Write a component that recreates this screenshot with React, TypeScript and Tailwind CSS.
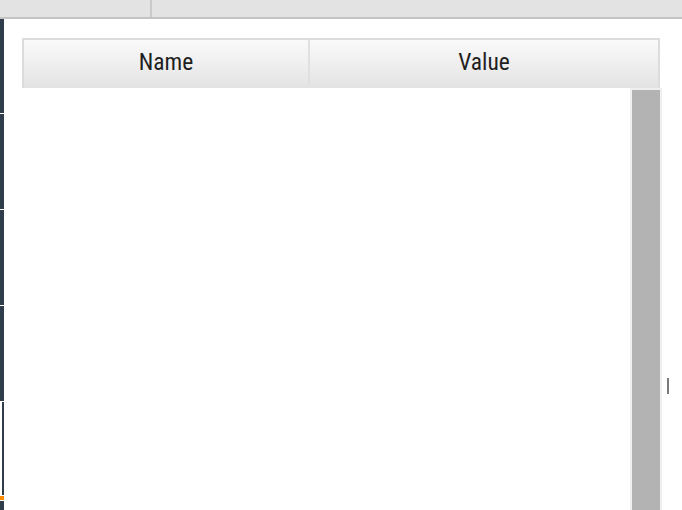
import React from "react";

const FONT = { fontFamily: '"Roboto Condensed", "DejaVu Sans Condensed", "Liberation Sans Narrow", Roboto, sans-serif' };

function SideStrip() {
  return (
    <div className="flex w-[4px] shrink-0 flex-col gap-[1px] bg-white">
      <div className="h-[94px] bg-[#2f3d4a]" />
      <div className="h-[95px] bg-[#2f3d4a]" />
      <div className="h-[95px] bg-[#2f3d4a]" />
      <div className="h-[95px] bg-[#2f3d4a]" />
      <div className="flex h-[93px] justify-end bg-white">
        <div className="w-[2px] bg-[#2f3d4a]" />
      </div>
      <div className="h-[4px] bg-[#ff8a00]" />
      <div className="flex-1 bg-[#2f3d4a]" />
    </div>
  );
}

export default function App() {
  return (
    <div className="flex h-[510px] w-[682px] flex-col overflow-hidden bg-white" style={FONT}>
      <div className="flex h-[19px] shrink-0 border-b-2 border-[#c4c4c4] bg-[#e3e3e3]">
        <div className="w-[152px] border-r-2 border-[#c9c9c9]" />
        <div className="flex-1" />
      </div>
      <div className="flex min-h-0 flex-1">
        <SideStrip />
        <main className="relative flex min-w-0 flex-1 flex-col pl-[18px] pt-[19px]">
          <div className="flex h-[50px] w-[638px] shrink-0 border-2 border-b-0 border-[#dcdcdc] bg-gradient-to-b from-[#fafafa] to-[#e3e3e3] pb-[3px] text-[23.5px] text-[#1f1f1f]">
            <div className="flex w-[286px] items-center justify-center border-r-2 border-[#e0e0e0]">
              Name
            </div>
            <div className="flex flex-1 items-center justify-center">Value</div>
          </div>
          <div className="flex min-h-0 flex-1">
            <div className="w-[608px]" />
            <div className="w-[32px] border-x-2 border-t-2 border-[#efefef] bg-[#b3b3b3]" />
          </div>
          <div className="absolute left-[663px] top-[359px] h-[16px] w-[2px] bg-[#7a7a7a]" />
        </main>
      </div>
    </div>
  );
}
